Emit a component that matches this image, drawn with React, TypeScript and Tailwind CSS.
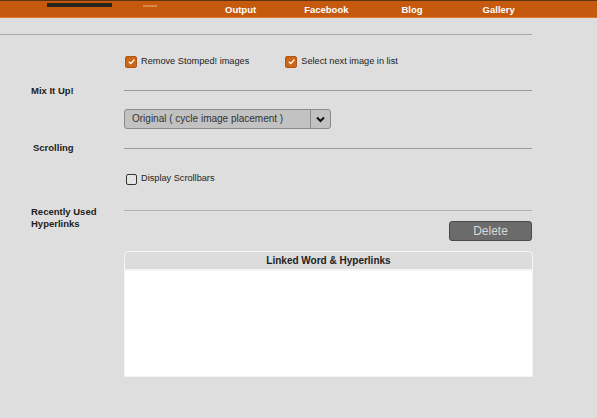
import React from "react";

function Check({ checked }: { checked: boolean }) {
  return checked ? (
    <span className="flex h-[12px] w-[12px] shrink-0 items-center justify-center rounded-[2px] bg-[#c9661c] border border-[#b25614]">
      <svg width="9" height="9" viewBox="0 0 10 10">
        <path d="M2 5.2 L4.2 7.3 L8.2 2.8" stroke="#fff" strokeWidth="1.4" fill="none" />
      </svg>
    </span>
  ) : (
    <span className="block h-[11px] w-[11px] shrink-0 rounded-[2px] border border-[#333] bg-[#e4e4e4]" />
  );
}

export default function App() {
  return (
    <div className="relative h-[418px] w-[597px] overflow-hidden bg-[#dedede] font-['Liberation_Sans',Arial,sans-serif]">
      <div className="relative h-[18px] border-t border-[#5a3412] border-b border-b-[#e07a30] bg-[#c55a0f]">
        <div className="absolute left-[47px] top-[2px] h-[4px] w-[65px] bg-[#2a2420]" />
        <div className="absolute left-[143px] top-[4px] h-[2px] w-[14px] bg-[#e39a60] opacity-70" />
        <div className="flex h-full items-center pt-[2px] text-[9.5px] font-bold text-white">
          <span className="ml-[225px]">Output</span>
          <span className="ml-[48px]">Facebook</span>
          <span className="ml-[53px]">Blog</span>
          <span className="ml-[60px]">Gallery</span>
        </div>
      </div>

      <div className="mt-[16px] h-px w-[532px] bg-[#a8a8a8]" />

      <div className="mt-[20px] flex items-center text-[9.2px] text-[#222]">
        <span className="ml-[125px]"><Check checked /></span>
        <span className="ml-[4px]">Remove Stomped! images</span>
        <span className="ml-[36px]"><Check checked /></span>
        <span className="ml-[4px]">Select next image in list</span>
      </div>

      <div className="mt-[15px] flex items-center">
        <span className="ml-[31px] w-[93px] text-[9.5px] font-bold text-[#222]">Mix It Up!</span>
        <div className="h-px w-[408px] bg-[#9a9a9a]" />
      </div>

      <div className="ml-[124px] mt-[11px] flex h-[20px] w-[207px] overflow-hidden rounded-[3px] border border-[#8a8a8a] bg-[#c2c2c2]">
        <span className="flex-1 pl-[7px] text-[10px] leading-[18px] text-[#333]">Original ( cycle image placement )</span>
        <span className="flex w-[20px] items-center justify-center border-l border-[#8a8a8a]">
          <svg width="9" height="7" viewBox="0 0 9 7">
            <path d="M1 1.5 L4.5 5 L8 1.5" stroke="#111" strokeWidth="2" fill="none" />
          </svg>
        </span>
      </div>

      <div className="mt-[12px] flex items-center">
        <span className="ml-[33px] w-[91px] text-[9.5px] font-bold text-[#222]">Scrolling</span>
        <div className="h-px w-[408px] bg-[#9a9a9a]" />
      </div>

      <div className="mt-[17px] flex items-center text-[9.2px] text-[#222]">
        <span className="ml-[126px]"><Check checked={false} /></span>
        <span className="ml-[4px]">Display Scrollbars</span>
      </div>

      <div className="mt-[20px] flex items-start">
        <span className="ml-[31px] w-[93px] text-[9.5px] font-bold leading-[12px] text-[#222]">Recently Used<br />Hyperlinks</span>
        <div className="mt-[4px] h-px w-[408px] bg-[#b0b0b0]" />
      </div>

      <div className="-mt-[9px] ml-[449px] flex h-[20px] w-[83px] items-center justify-center rounded-[3px] border border-[#4a4a4a] bg-[#6b6b6b] text-[12px] text-[#d8d8d8]">
        Delete
      </div>

      <div className="ml-[124px] mt-[10px] h-[126px] w-[409px] overflow-hidden rounded-t-[4px] border border-[#f4f4f4] bg-white">
        <div className="flex h-[19px] items-center justify-center border-b-2 border-[#f4f4f4] bg-[#dcdcdc] text-[10px] font-bold text-[#222]">
          Linked Word &amp; Hyperlinks
        </div>
      </div>
    </div>
  );
}
